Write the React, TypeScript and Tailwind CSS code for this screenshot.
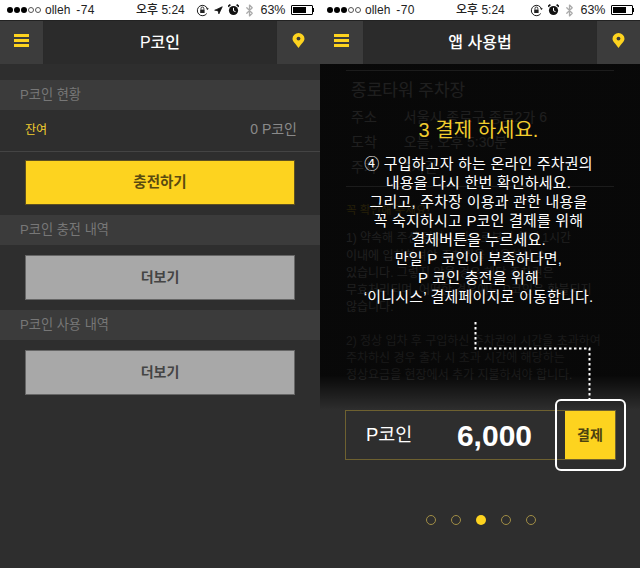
import { Bluetooth, Navigation } from 'lucide-react';

function Signal() {
  return (
    <div className="flex items-center gap-[1px]">
      {[0, 1, 2].map((i) => <span key={i} className="w-[6px] h-[6px] rounded-full bg-black" />)}
      {[0, 1].map((i) => <span key={i} className="w-[6px] h-[6px] rounded-full border border-[#555]" />)}
    </div>
  );
}

function Lock() {
  return (
    <svg width="13" height="13" viewBox="0 0 13 13" className="shrink-0">
      <path d="M10.8 9.5A5.2 5.2 0 1 1 11.5 5" fill="none" stroke="#222" strokeWidth="1" />
      <path d="M10 4.5l1.6 1.4 1.2-1.6z" fill="#222" />
      <rect x="4.2" y="5.6" width="4.4" height="3.4" fill="#222" />
      <path d="M5 5.6V4.4a1.4 1.4 0 0 1 2.8 0v1.2" fill="none" stroke="#222" strokeWidth="0.9" />
    </svg>
  );
}

function Alarm() {
  return (
    <svg width="11" height="12" viewBox="0 0 11 12" className="shrink-0">
      <circle cx="5.5" cy="6.5" r="4.6" fill="#111" />
      <path d="M5.5 3.8v3l2 .8" fill="none" stroke="#fff" strokeWidth="1" />
      <path d="M0 2.6L2.4.6M11 2.6L8.6.6" stroke="#111" strokeWidth="1.6" />
    </svg>
  );
}

function Battery() {
  return (
    <div className="flex items-center">
      <div className="w-[22px] h-[10px] border border-black p-[1px] rounded-[1px]">
        <div className="h-full w-[13px] bg-black" />
      </div>
      <div className="w-[1.5px] h-[4px] bg-black" />
    </div>
  );
}

function StatusBar({ signal, location }: { signal: string; location?: boolean }) {
  return (
    <div className="h-5 bg-white text-[#222] relative flex items-center justify-between pl-[7px] pr-[6px] text-[12px]">
      <div className="flex items-center gap-[4px]">
        <Signal />
        <span>olleh</span>
        <span className="ml-[2px] tracking-[0.3px]">{signal}</span>
      </div>
      <div className="absolute left-[136px] top-0 h-5 flex items-center font-medium">오후 5:24</div>
      <div className="flex items-center gap-[5px]">
        <Lock />
        {location && <Navigation size={9} fill="#111" stroke="#111" />}
        <Alarm />
        <Bluetooth size={13} strokeWidth={2.4} className="text-[#aaa] -mx-[1px]" />
        <span className="text-[12.5px]">63%</span>
        <Battery />
      </div>
    </div>
  );
}

function Hamburger() {
  return (
    <div className="flex flex-col gap-[2.5px] -mt-1">
      {[0, 1, 2].map((i) => <span key={i} className="w-[15px] h-[2.5px] bg-[#fdd31f]" />)}
    </div>
  );
}

function Pin() {
  return (
    <svg width="13" height="15" viewBox="0 0 13 15" className="-mt-1">
      <path d="M6.5 15C3.5 10.6.5 8.2.5 5.7a6 5.7 0 0 1 12 0C12.5 8.2 9.5 10.6 6.5 15z" fill="#fdd31f" />
      <circle cx="6.5" cy="5.6" r="1.9" fill="#3c3c3c" />
    </svg>
  );
}

function NavBar({ title }: { title: string }) {
  return (
    <div className="h-11 flex bg-[#2b2b2b] border-t border-[#222]">
      <div className="w-11 bg-[#3c3c3c] flex items-center justify-center border-r border-[#2a2a2a]">
        <Hamburger />
      </div>
      <div className="flex-1 flex items-center justify-center text-white text-[16px] font-medium">{title}</div>
      <div className="w-11 bg-[#3c3c3c] flex items-center justify-center border-l border-[#2a2a2a]">
        <Pin />
      </div>
    </div>
  );
}

function SectionHead({ label }: { label: string }) {
  return <div className="h-[30px] bg-[#3b3b3b] px-5 flex items-center text-[13.2px] text-[#777]">{label}</div>;
}

function MoreButton() {
  return (
    <div className="mx-[25px] my-[10px] h-[45px] bg-[#a8a8a8] border border-[#666] flex items-center justify-center text-[14px] font-bold text-[#444]">
      더보기
    </div>
  );
}

function CoinPanel() {
  return (
    <div className="w-80 h-full flex flex-col bg-[#2e2e2e]">
      <StatusBar signal="-74" location />
      <NavBar title="P코인" />
      <div className="h-4" />
      <SectionHead label="P코인 현황" />
      <div className="h-[42px] pl-[25px] pr-[23px] pb-[2px] flex items-center justify-between border-b border-[#444]">
        <span className="text-[12px] text-[#f2cd2e]">잔여</span>
        <span className="text-[14px] text-[#8a8a8a]">0 P코인</span>
      </div>
      <div className="mx-[25px] mt-2 mb-[10px] h-[45px] bg-[#fdd31f] border border-[#5e5020] flex items-center justify-center text-[14.5px] font-bold text-[#5a4b10]">
        충전하기
      </div>
      <SectionHead label="P코인 충전 내역" />
      <MoreButton />
      <SectionHead label="P코인 사용 내역" />
      <MoreButton />
    </div>
  );
}

function GuideBackdrop() {
  return (
    <div className="px-[26px] pt-[6px] text-[#aaaaaa]">
      <div className="border-t border-[#999] pt-[6px] pl-[5px] text-[17px] leading-[28px]">종로타워 주차장</div>
      <div className="flex gap-[27px] text-[14px] leading-[25px] pl-[5px]"><span>주소</span><span>서울시 종로구 종로2가 6</span></div>
      <div className="flex gap-[27px] text-[14px] leading-[25px] pl-[5px]"><span>도착</span><span>오늘, 오후 5:30분</span></div>
      <div className="flex gap-[27px] text-[14px] leading-[25px] pl-[5px]"><span>주차</span><span>1시간</span></div>
      <div className="border-t border-[#999] mt-[6px] pt-[15px] text-[11.5px] text-[#c9a92a]">꼭 확인해 주세요!</div>
      <div className="text-[12px] leading-[17.3px] mt-[11px] mb-[16px]">
        1) 약속해 주신 입차 시간으로부터 최대 1시간<br />
        이내에 입차하셔야 주차권을 사용하실 수<br />
        있습니다. 그렇지 않을 경우 해당 주차권은<br />
        무효처리되며, 어떠한 경우에도 P코인은 환불되지<br />
        않습니다.
      </div>
      <div className="text-[12px] leading-[17.3px] text-[#888]">
        2) 정상 입차 후 구입하신 주차권의 시간을 초과하여<br />
        주차하신 경우 출차 시 초과 시간에 해당하는<br />
        정상요금을 현장에서 추가 지불하셔야 합니다.
      </div>
    </div>
  );
}

function Connector() {
  return (
    <svg width="130" height="80" viewBox="0 0 130 80" className="absolute left-[150px] top-[258px]">
      <path d="M5.5 0V26.5H119.5V78" fill="none" stroke="#fff" strokeWidth="2" strokeDasharray="2.5 2.5" />
    </svg>
  );
}

function GuidePanel() {
  const dots = [0, 1, 2, 3, 4];
  return (
    <div className="w-80 h-full flex flex-col bg-[#2e2e2e]">
      <StatusBar signal="-70" />
      <NavBar title="앱 사용법" />
      <div className="flex-1 relative overflow-hidden">
        <GuideBackdrop />
        <div className="absolute inset-x-0 top-0 h-[346px] bg-gradient-to-b from-[#000000d1] from-90% to-transparent" />
        <div className="absolute inset-x-0 top-[52px] pr-[3px] flex flex-col items-center text-white">
          <div className="text-[20px] leading-[28px] text-[#f2cd2e] mb-[10px]">3 결제 하세요.</div>
          <div className="text-[15px] leading-[19px] text-center tracking-[0.2px]">
            ④ 구입하고자 하는 온라인 주차권의<br />
            내용을 다시 한번 확인하세요.<br />
            그리고, 주차장 이용과 관한 내용을<br />
            꼭 숙지하시고 P코인 결제를 위해<br />
            결제버튼을 누르세요.<br />
            만일 P 코인이 부족하다면,<br />
            P 코인 충전을 위해<br />
            ‘이니시스’ 결제페이지로 이동합니다.
          </div>
        </div>
        <Connector />
        <div className="absolute left-[25px] top-[346px] w-[271px] h-[50px] flex border border-[#6e6130]">
          <div className="flex-1 flex items-center justify-between pl-5 pr-[33px] text-white">
            <span className="text-[18.5px]">P코인</span>
            <span className="text-[30px] font-bold">6,000</span>
          </div>
          <div className="w-[50px] bg-[#fdd31f] flex items-center justify-center text-[14px] font-bold text-[#4d4310]">결제</div>
        </div>
        <div className="absolute left-[235px] top-[335px] w-[71px] h-[72px] rounded-[6px] border-[2.5px] border-white" />
        <div className="absolute left-[106px] top-[451px] flex gap-[15px]">
          {dots.map((d) => (
            <span
              key={d}
              className={d === 2 ? 'w-[10px] h-[10px] rounded-full bg-[#fdd31f]' : 'w-[10px] h-[10px] rounded-full border border-[#a08d45]'}
            />
          ))}
        </div>
      </div>
    </div>
  );
}

export default function App() {
  return (
    <div
      className="w-[640px] h-[568px] flex overflow-hidden"
      style={{ fontFamily: '"Liberation Sans", "Noto Sans CJK KR", sans-serif' }}
    >
      <CoinPanel />
      <GuidePanel />
    </div>
  );
}
